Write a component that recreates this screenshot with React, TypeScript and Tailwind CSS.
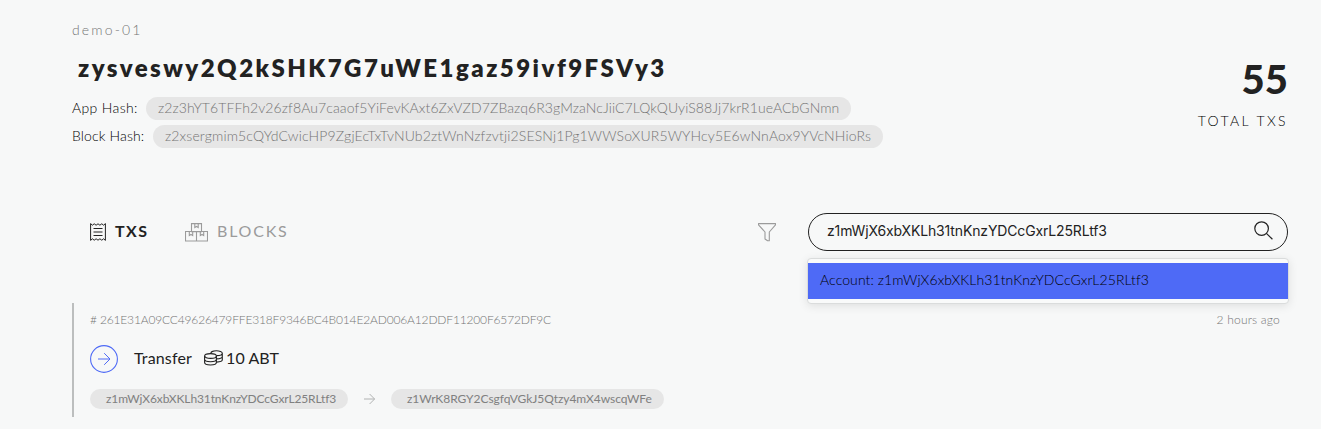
import React from 'react';

const coin = { fill: 'none', stroke: 'currentColor', strokeWidth: 1.1 };

function ReceiptIcon() {
  return (
    <svg className="block" width="16" height="18" viewBox="0 0 16 18" fill="none" stroke="currentColor" strokeWidth="1">
      <path d="M.6.6 2.4 2.2 4.2.8 6.1 2.2 8 .8 9.9 2.2 11.8.8 13.6 2.2 15.4.6V17.4L13.6 15.8 11.8 17.2 9.9 15.8 8 17.2 6.1 15.8 4.2 17.2 2.4 15.8.6 17.4Z" />
      <path d="M3.5 5.5h9M3.5 9h9M3.5 12.5h9" />
    </svg>
  );
}

function BoxesIcon() {
  return (
    <svg className="block" width="23" height="19" viewBox="0 0 23 19" fill="none" stroke="currentColor" strokeWidth="1.1">
      <path d="M6.5.6h10v8h-10zM.5 8.5h11v9.5H.5zM11.5 8.5h11v9.5h-11z" />
      <path d="M9.8.5v4l1.7-1 1.7 1v-4M4.3 8.5v4l1.7-1 1.7 1v-4M15.3 8.5v4l1.7-1 1.7 1v-4" />
    </svg>
  );
}

function FilterIcon() {
  return (
    <svg className="block" width="18" height="19" viewBox="0 0 18 19" fill="none" stroke="currentColor" strokeWidth="1.1" strokeLinejoin="round">
      <path d="M.5.6h17v1.2L11.3 9v8.8H9.6L7 16V9L.5 1.8Z" />
    </svg>
  );
}

function SearchIcon() {
  return (
    <svg className="mb-[3px] block" width="19" height="19" viewBox="0 0 19 19" fill="none" stroke="currentColor" strokeWidth="1.2">
      <circle cx="7.6" cy="7.6" r="6.8" />
      <path d="m12.4 12.4 6 5.8" />
    </svg>
  );
}

function CoinsIcon() {
  return (
    <svg className="mb-[3px] block" width="19" height="16" viewBox="0 0 19 16" {...coin}>
      <ellipse cx="6.5" cy="6" rx="5.9" ry="2.4" />
      <path d="M.6 6v6.6c0 1.3 2.6 2.4 5.9 2.4s5.9-1.1 5.9-2.4V6M.6 9.3c0 1.3 2.6 2.4 5.9 2.4s5.9-1.1 5.9-2.4" />
      <path d="M6.8 3.4C6.8 1.9 9.3.7 12.4.7s5.9 1.2 5.9 2.5-2.6 2.4-5.9 2.4M18.3 3.2v6.6c0 1.2-2.6 2.2-5.7 2.3M18.3 6.5c0 1.3-2.6 2.3-5.7 2.4" />
    </svg>
  );
}

function HashRow({ label, value, labelClass, pillClass, textClass }: { label: string; value: string; labelClass: string; pillClass: string; textClass: string }) {
  return (
    <div className="flex h-7 items-center whitespace-nowrap text-[14px]">
      <span className={`pb-px font-light text-black ${labelClass}`}>{label}</span>
      <span className={`flex h-[23px] items-center rounded-full bg-[#e6e6e6] pb-px pl-3 font-light text-[#757575] ${pillClass}`}>
        <span className={textClass}>{value}</span>
      </span>
    </div>
  );
}

export default function App() {
  return (
    <main className="h-[429px] w-[1321px] overflow-hidden bg-[#f7f8f8] pr-[33px] pl-[72px] font-['Lato',sans-serif] text-[#222]">
      <header className="flex h-[213px] justify-between">
        <div className="pt-5">
          <div className="h-5 text-[14px] leading-5 font-light tracking-[2.15px] text-[#757575]">demo-01</div>
          <h1 className="mt-3 mb-[10px] h-8 pl-[6px] text-[24px] leading-8 font-extrabold tracking-[2.47px]">zysveswy2Q2kSHK7G7uWE1gaz59ivf9FSVy3</h1>
          <HashRow label="App Hash:" labelClass="w-[74px] tracking-[0.36px]" pillClass="w-[705px]" textClass="tracking-[0.09px]" value="z2z3hYT6TFFh2v26zf8Au7caaof5YiFevKAxt6ZxVZD7ZBazq6R3gMzaNcJiiC7LQkQUyiS88Jj7krR1ueACbGNmn" />
          <HashRow label="Block Hash:" labelClass="w-[81px] tracking-[0.14px]" pillClass="w-[730px]" textClass="tracking-[0.145px]" value="z2xsergmim5cQYdCwicHP9ZgjEcTxTvNUb2ztWnNzfzvtji2SESNj1Pg1WWSoXUR5WYHcy5E6wNnAox9YVcNHioRs" />
        </div>
        <div className="pt-[55px] text-right">
          <div className="h-12 text-[40px] leading-[48px] font-black">55</div>
          <div className="mt-2 text-[14px] leading-5 font-light tracking-[2.4px] text-black">TOTAL TXS</div>
        </div>
      </header>

      <section className="flex h-[90px] items-start">
        <nav className="flex h-[38px] w-[686px] items-center pl-[18px] text-[16px]">
          <ReceiptIcon />
          <span className="ml-[9px] w-[70px] pb-[2px] font-bold tracking-[1.5px]">TXS</span>
          <span className="text-[#9b9b9b]"><BoxesIcon /></span>
          <span className="ml-[9px] pb-[2px] tracking-[1.8px] text-[#9b9b9b]">BLOCKS</span>
        </nav>
        <div className="flex h-[38px] w-[50px] items-center text-[#9b9b9b]"><FilterIcon /></div>
        <div className="relative w-[480px]">
          <div className="flex h-[38px] items-center justify-between rounded-full border border-[#222] pr-[14px] pl-[18px] font-['Inter',sans-serif] text-[14px]">
            <span className="pb-[3px] tracking-[-0.14px]">z1mWjX6xbXKLh31tnKnzYDCcGxrL25RLtf3</span>
            <SearchIcon />
          </div>
          <div className="absolute top-[45px] -left-px z-10 w-[482px] rounded-[4px] border border-[#dadcdc] bg-[#f9fafa] py-1 shadow-[0_2px_10px_rgba(0,0,0,0.1)]">
            <div className="flex h-9 items-center bg-[#4e6af6] pb-[3px] pl-3 text-[14px] font-light text-black"><span className="tracking-[0.09px]">Account: z1mWjX6xbXKLh31tnKnzYDCcGxrL25RLtf3</span></div>
          </div>
        </div>
      </section>

      <article className="h-[114px] border-l-2 border-[#bcbebe] pl-4">
        <div className="flex h-[34px] items-center justify-between pr-2 text-[12px] font-light text-[#757575]">
          <span className="tracking-[-0.16px]"># 261E31A09CC49626479FFE318F9346BC4B014E2AD006A12DDF11200F6572DF9C</span>
          <span className="tracking-[0.2px]">2 hours ago</span>
        </div>
        <div className="flex h-11 items-center text-[16px]">
          <svg className="block" width="28" height="28" viewBox="0 0 28 28" fill="none" stroke="#4e6af6">
            <circle cx="14" cy="14" r="13.4" strokeWidth="1.1" />
            <path d="M8 14h12M14.2 8.2 20 14l-5.8 5.8" />
          </svg>
          <span className="ml-4 w-[70px] pb-[3px] tracking-[0.15px]">Transfer</span>
          <CoinsIcon />
          <span className="ml-[3px] pb-[3px] tracking-[0.1px]">10 ABT</span>
        </div>
        <div className="flex h-9 items-center text-[12px] text-[#808080]">
          <span className="flex h-5 w-[258px] items-center rounded-full bg-[#e6e6e6] pl-4"><span className="tracking-[-0.12px]">z1mWjX6xbXKLh31tnKnzYDCcGxrL25RLtf3</span></span>
          <svg className="mx-4 block" width="11" height="12" viewBox="0 0 11 12" fill="none" stroke="#b0b2b2">
            <path d="M0 6h10.5M5.6 1l5 5-5 5" />
          </svg>
          <span className="flex h-5 w-[273px] items-center rounded-full bg-[#e6e6e6] pl-4"><span className="tracking-[-0.05px]">z1WrK8RGY2CsgfqVGkJ5Qtzy4mX4wscqWFe</span></span>
        </div>
      </article>
    </main>
  );
}
